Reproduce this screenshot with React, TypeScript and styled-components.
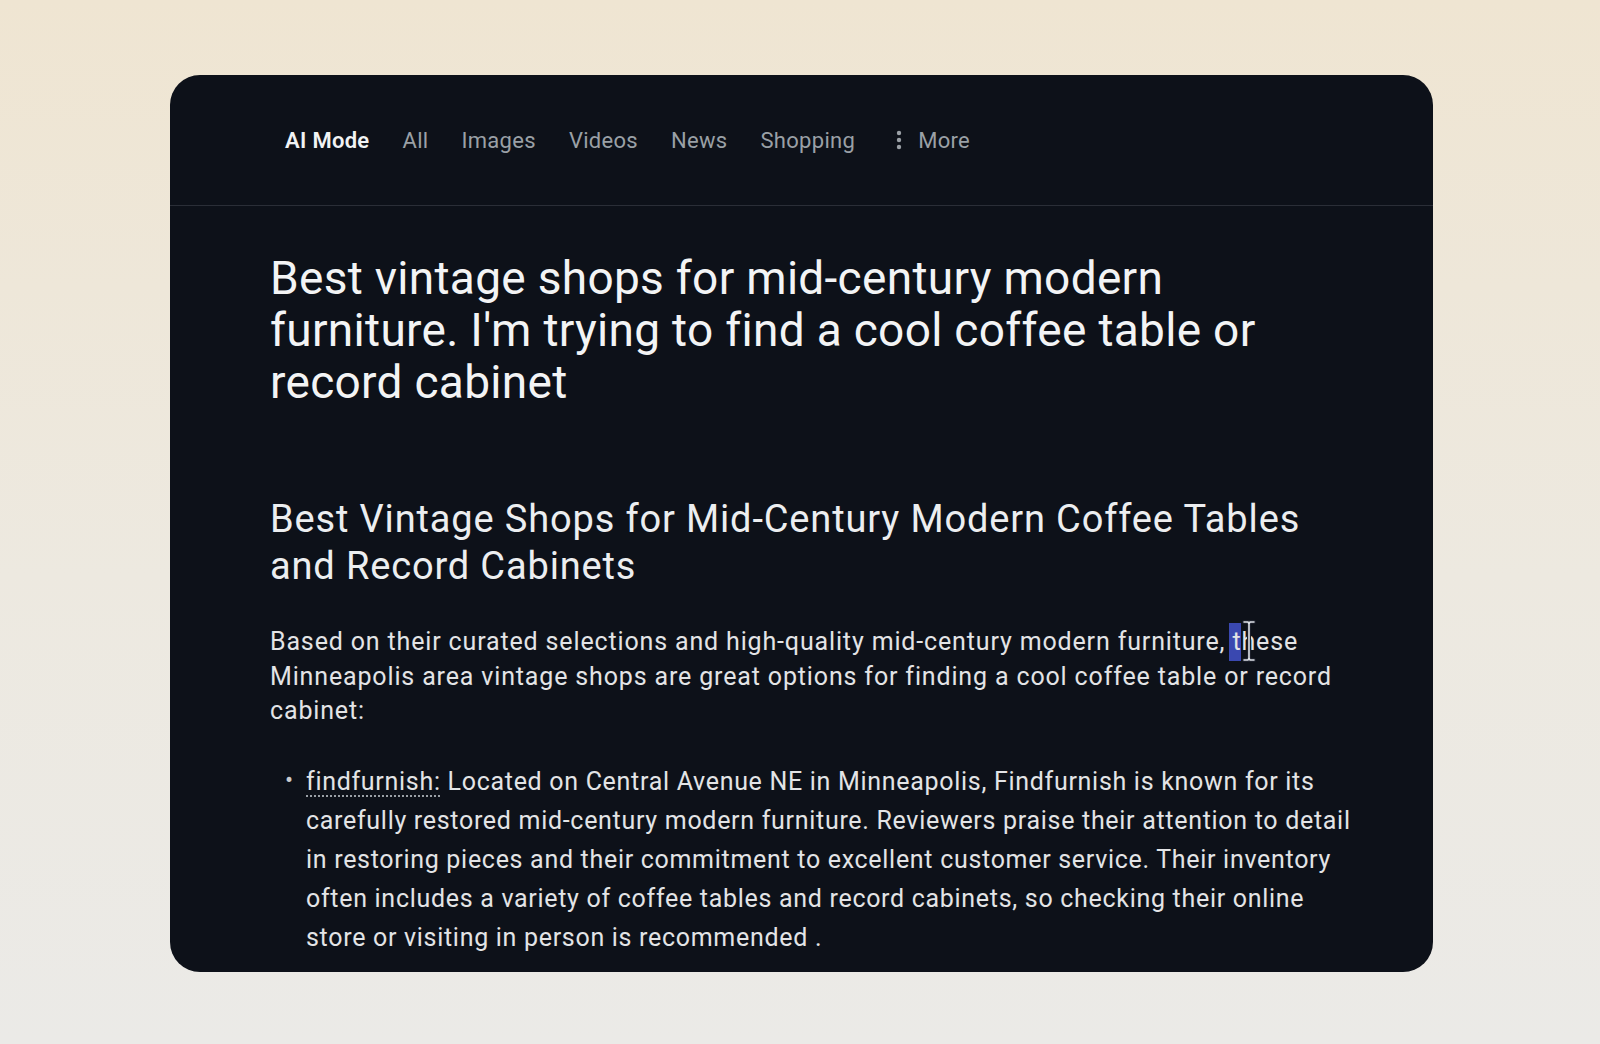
import styled, { createGlobalStyle } from "styled-components";

const GlobalStyle = createGlobalStyle`
  html, body {
    margin: 0;
    padding: 0;
  }
  body {
    font-family: Roboto, "Liberation Sans", sans-serif;
    background: linear-gradient(180deg, #efe5d2 0%, #ede9e0 55%, #ebeae7 100%);
    min-height: 1044px;
  }
`;

const Page = styled.div`
  min-height: 1044px;
  padding: 75px 167px 72px 170px;
  box-sizing: border-box;
`;

const Card = styled.div`
  background: #0d1119;
  border-radius: 30px;
  height: 897px;
  overflow: hidden;
  display: flex;
  flex-direction: column;
`;

const TopBar = styled.nav`
  height: 130px;
  flex-shrink: 0;
  display: flex;
  align-items: center;
  gap: 33px;
  padding: 0 0 0 115px;
  border-bottom: 1px solid #2a2e37;
`;

const Tab = styled.span<{ $active?: boolean }>`
  font-size: 22px;
  letter-spacing: 0.3px;
  font-weight: ${(p) => (p.$active ? 600 : 400)};
  color: ${(p) => (p.$active ? "#f1f3f4" : "#9aa0a6")};
  display: flex;
  align-items: center;
  gap: 16px;
`;

const MoreTab = styled(Tab)`
  margin-left: 8px;
`;

const Body = styled.div`
  padding: 46px 0 0 100px;
  max-width: 1095px;
`;

const Query = styled.h1`
  margin: 0;
  font-size: 46px;
  letter-spacing: 0.3px;
  line-height: 52px;
  font-weight: 400;
  color: #f3f4f5;
  max-width: 1000px;
`;

const Title = styled.h2`
  margin: 88px 0 0;
  font-size: 38px;
  letter-spacing: 0.85px;
  line-height: 47px;
  font-weight: 400;
  color: #eceef0;
`;

const Intro = styled.p`
  margin: 35px 0 0;
  font-size: 25px;
  letter-spacing: 0.85px;
  line-height: 34.5px;
  color: #e3e4e6;
`;

const Picked = styled.span`
  position: relative;
  background: #3a48b0;
  padding: 4px 0 5px 3px;
  margin-left: -3px;
`;

const Cursor = styled.svg`
  position: absolute;
  left: 12px;
  top: -3px;
  width: 16px;
  height: 42px;
`;

const List = styled.ul`
  margin: 33px 0 0;
  padding: 0 0 0 36px;
  list-style: none;
`;

const Item = styled.li`
  position: relative;
  font-size: 25px;
  letter-spacing: 0.7px;
  line-height: 39px;
  color: #e3e4e6;
  &::before {
    content: "•";
    position: absolute;
    left: -21px;
    top: -1px;
    font-size: 24px;
    color: #c9cbce;
  }
`;

const Source = styled.span`
  text-decoration: underline dotted #9aa0a6;
  text-underline-offset: 6px;
  text-decoration-thickness: 2px;
`;

const tabs = ["All", "Images", "Videos", "News", "Shopping"];

export default function App() {
  return (
    <>
      <GlobalStyle />
      <Page>
        <Card>
          <TopBar>
            <Tab $active>AI Mode</Tab>
            {tabs.map((t) => (
              <Tab key={t}>{t}</Tab>
            ))}
            <MoreTab>
              <svg width="6" height="20" viewBox="0 0 6 20">
                <circle cx="3" cy="3" r="2.2" fill="#9aa0a6" />
                <circle cx="3" cy="10" r="2.2" fill="#9aa0a6" />
                <circle cx="3" cy="17" r="2.2" fill="#9aa0a6" />
              </svg>
              More
            </MoreTab>
          </TopBar>
          <Body>
            <Query>
              Best vintage shops for mid-century modern furniture. I'm trying to find a cool coffee table or record cabinet
            </Query>
            <Title>Best Vintage Shops for Mid-Century Modern Coffee Tables and Record Cabinets</Title>
            <Intro>
              Based on their curated selections and high-quality mid-century modern furniture,{" "}
              <Picked>
                t
                <Cursor viewBox="0 0 16 42">
                  <path
                    d="M3 2h4l1 2 1-2h4M8 4v34M3 40h4l1-2 1 2h4"
                    fill="none"
                    stroke="#1b1f2a"
                    strokeWidth="4"
                    strokeLinecap="round"
                  />
                  <path
                    d="M3 2h4l1 2 1-2h4M8 4v34M3 40h4l1-2 1 2h4"
                    fill="none"
                    stroke="#dfe3ea"
                    strokeWidth="1.6"
                    strokeLinecap="round"
                  />
                </Cursor>
              </Picked>
              hese Minneapolis area vintage shops are great options for finding a cool coffee table or record cabinet:
            </Intro>
            <List>
              <Item>
                <Source>findfurnish:</Source> Located on Central Avenue NE in Minneapolis, Findfurnish is known for its
                carefully restored mid-century modern furniture. Reviewers praise their attention to detail in restoring
                pieces and their commitment to excellent customer service. Their inventory often includes a variety of
                coffee tables and record cabinets, so checking their online store or visiting in person is recommended .
              </Item>
            </List>
          </Body>
        </Card>
      </Page>
    </>
  );
}
